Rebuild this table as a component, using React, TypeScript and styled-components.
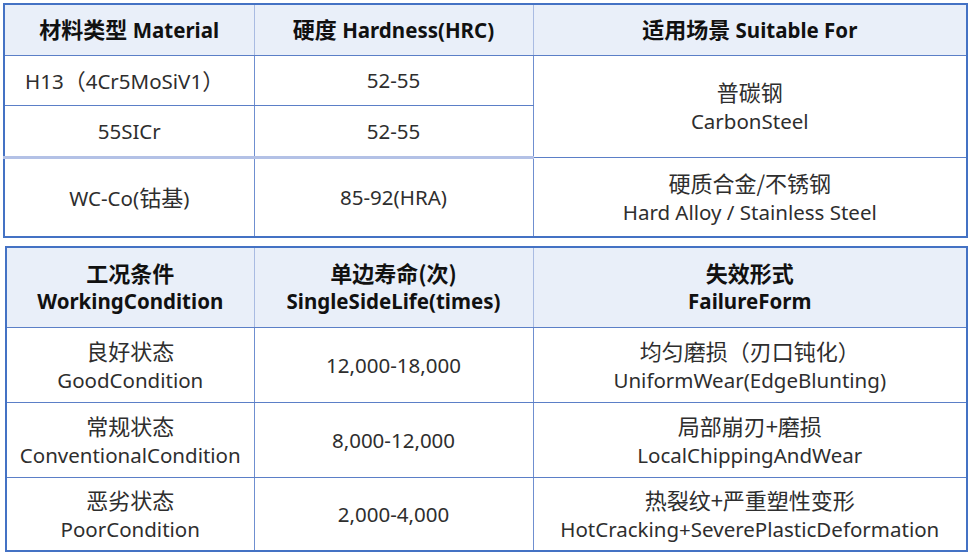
import React from "react";
import styled, { createGlobalStyle } from "styled-components";

const GlobalStyle = createGlobalStyle`
  html, body {
    margin: 0;
    padding: 0;
    background: #ffffff;
  }
  body {
    font-family: "Noto Sans", "Noto Sans CJK SC", sans-serif;
    color: #222222;
  }
`;

const conditions = [
  {
    cn: "良好状态",
    en: "GoodCondition",
    life: "12,000-18,000",
    failCn: "均匀磨损（刃口钝化）",
    failEn: "UniformWear(EdgeBlunting)",
    height: 75,
  },
  {
    cn: "常规状态",
    en: "ConventionalCondition",
    life: "8,000-12,000",
    failCn: "局部崩刃+磨损",
    failEn: "LocalChippingAndWear",
    height: 75,
  },
  {
    cn: "恶劣状态",
    en: "PoorCondition",
    life: "2,000-4,000",
    failCn: "热裂纹+严重塑性变形",
    failEn: "HotCracking+SeverePlasticDeformation",
    height: 74,
  },
];

const App = () => {
  return (
    <>
      <GlobalStyle />
      <Page>
        <Table $offset={0}>
          <colgroup>
            <col style={{ width: 250 }} />
            <col style={{ width: 279 }} />
            <col />
          </colgroup>
          <thead>
            <tr>
              <HeadCell $height={51}>
                <Cjk>材料类型</Cjk> Material
              </HeadCell>
              <HeadCell $height={51}>
                <Cjk>硬度</Cjk> Hardness(HRC)
              </HeadCell>
              <HeadCell $height={51}>
                <Cjk>适用场景</Cjk> Suitable For
              </HeadCell>
            </tr>
          </thead>
          <tbody>
            <tr>
              <Cell $height={50} $align="left">
                H13<Cjk>（</Cjk>4Cr5MoSiV1<Cjk>）</Cjk>
              </Cell>
              <Cell $height={50}>52-55</Cell>
              <Cell rowSpan={2}>
                <Line>
                  <Cjk>普碳钢</Cjk>
                </Line>
                <Line>CarbonSteel</Line>
              </Cell>
            </tr>
            <tr>
              <Cell $height={52} $light>
                55SICr
              </Cell>
              <Cell $height={52} $light>
                52-55
              </Cell>
            </tr>
            <tr>
              <Cell $height={80}>
                WC-Co(<Cjk>钴基</Cjk>)
              </Cell>
              <Cell $height={80}>85-92(HRA)</Cell>
              <Cell $height={80}>
                <Line>
                  <Cjk>硬质合金/不锈钢</Cjk>
                </Line>
                <Line>Hard Alloy / Stainless Steel</Line>
              </Cell>
            </tr>
          </tbody>
        </Table>

        <Table $offset={2}>
          <colgroup>
            <col style={{ width: 248 }} />
            <col style={{ width: 279 }} />
            <col />
          </colgroup>
          <thead>
            <tr>
              <HeadCell $height={80}>
                <Line>
                  <Cjk>工况条件</Cjk>
                </Line>
                <Line>WorkingCondition</Line>
              </HeadCell>
              <HeadCell $height={80}>
                <Line>
                  <Cjk>单边寿命(次)</Cjk>
                </Line>
                <Line>SingleSideLife(times)</Line>
              </HeadCell>
              <HeadCell $height={80}>
                <Line>
                  <Cjk>失效形式</Cjk>
                </Line>
                <Line>FailureForm</Line>
              </HeadCell>
            </tr>
          </thead>
          <tbody>
            {conditions.map((row) => (
              <tr key={row.en}>
                <Cell $height={row.height}>
                  <Line>
                    <Cjk>{row.cn}</Cjk>
                  </Line>
                  <Line>{row.en}</Line>
                </Cell>
                <Cell $height={row.height}>{row.life}</Cell>
                <Cell $height={row.height}>
                  <Line>
                    <Cjk>{row.failCn}</Cjk>
                  </Line>
                  <Line>{row.failEn}</Line>
                </Cell>
              </tr>
            ))}
          </tbody>
        </Table>
      </Page>
    </>
  );
};

export default App;

const Page = styled.div`
  display: flex;
  flex-direction: column;
  gap: 8px;
  padding: 3px 5px 3px 3px;
  width: 965px;
`;

const Table = styled.table<{ $offset: number }>`
  width: ${(p) => 965 - p.$offset}px;
  margin-left: ${(p) => p.$offset}px;
  border-collapse: collapse;
  table-layout: fixed;
  border: 2.5px solid #4472c4;
`;

const HeadCell = styled.th<{ $height: number }>`
  box-sizing: border-box;
  height: ${(p) => p.$height}px;
  padding: 0 4px;
  background: #e9eff9;
  border: 1px solid #a9bbe2;
  border-bottom: 1px solid #5b7fc7;
  font-size: 20.5px;
  font-weight: 700;
  color: #111111;
  text-align: center;
  vertical-align: middle;
  line-height: 27px;
  white-space: nowrap;
`;

const Cell = styled.td<{
  $height?: number;
  $align?: "left" | "center";
  $light?: boolean;
}>`
  box-sizing: border-box;
  height: ${(p) => (p.$height ? `${p.$height}px` : "auto")};
  padding: 0 4px;
  padding-left: ${(p) => (p.$align === "left" ? "20px" : "4px")};
  border-left: 1px solid #6f8fd0;
  border-right: 1px solid #6f8fd0;
  border-top: 1px solid #5b7fc7;
  border-bottom: ${(p) => (p.$light ? "3px solid #b3c1e6" : "1px solid #5b7fc7")};
  font-size: 20.5px;
  font-weight: 400;
  color: #2e2e2e;
  text-align: ${(p) => p.$align ?? "center"};
  vertical-align: middle;
  line-height: 28px;
  white-space: nowrap;
`;

const Cjk = styled.span`
  font-family: "Noto Sans CJK SC", sans-serif;
  font-size: 22px;
`;

const Line = styled.div`
  display: block;
`;
